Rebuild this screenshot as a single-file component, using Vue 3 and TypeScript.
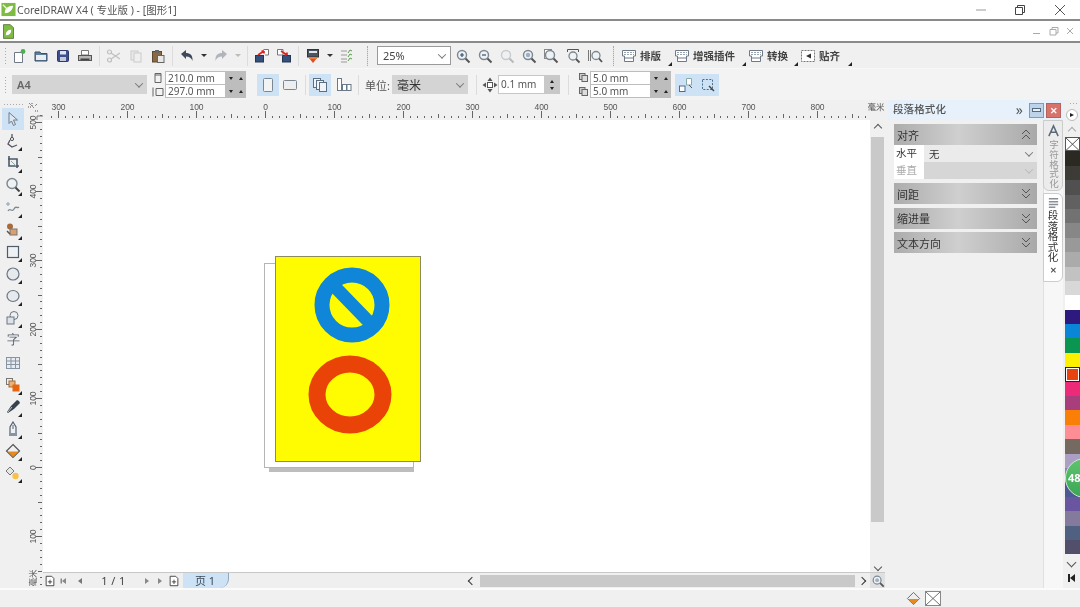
<template>
  <div class="app">
    <!-- 标题栏 -->
    <header class="titlebar">
      <svg class="appicon" viewBox="0 0 16 16">
        <rect x="0.5" y="1" width="15" height="14" fill="#7dbb42" />
        <path d="M4 12C4 7 7 4 13 4C12 9 9 12 4 12Z" fill="#fff" />
        <path d="M2 3L7 8" stroke="#e8f3d8" stroke-width="1.5" />
      </svg>
      <span class="apptitle">CorelDRAW X4 ( 专业版 ) - [图形1]</span>
      <div class="wincontrols">
        <svg viewBox="0 0 12 12" class="win w1"><path d="M1 6H11" stroke="#999" /></svg>
        <svg viewBox="0 0 12 12" class="win w2"><path d="M1.5 3.5H8.5V10.5H1.5ZM3.5 3.5V1.5H10.5V8.5H8.5" fill="none" stroke="#444" /></svg>
        <svg viewBox="0 0 12 12" class="win w3"><path d="M1 1L11 11M11 1L1 11" stroke="#555" /></svg>
      </div>
    </header>

    <!-- 菜单栏 -->
    <div class="menubar">
      <svg class="docicon" viewBox="0 0 12 16">
        <path d="M0.5 0.5H8L11.5 4V15.5H0.5Z" fill="#7dbb42" stroke="#5c7a3a" />
        <path d="M3 12C3 8 5 6 9 6C9 10 7 12 3 12Z" fill="#fff" />
      </svg>
      <div class="mdi">
        <span class="mdi-min"></span>
        <svg viewBox="0 0 10 10" class="mdi-ic"><path d="M1 3.5H7V9H1ZM3 3.5V1.5H9V7H7" fill="none" stroke="#aaa" /></svg>
        <svg viewBox="0 0 10 10" class="mdi-ic"><path d="M2 2L8 8M8 2L2 8" stroke="#aaa" /></svg>
      </div>
    </div>

    <!-- 标准工具栏 -->
    <div class="toolbar one">
      <span class="grip"></span>
      <template v-for="(item, i) in toolbarLeft" :key="i">
        <span v-if="item === '|'" class="sep"></span>
        <span v-else-if="item === 'v'" class="droparrow"></span>
        <span v-else-if="item === '~'" class="droparrow off"></span>
        <button v-else class="tb">
          <svg viewBox="0 0 16 16" class="ic" :class="{ dim: dimIcons.includes(item) }" v-html="icons[item]"></svg>
        </button>
      </template>
      <span class="sep gripsep"></span>
      <div class="combo zoomcombo"><span>25%</span><i class="chev"></i></div>
      <button v-for="z in zoomTools" :key="z" class="tb">
        <svg viewBox="0 0 16 16" class="ic" :class="{ dim: z === 'zoom3' }" v-html="icons[z]"></svg>
      </button>
      <span class="sep gripsep2"></span>
      <div v-for="b in bigTools" :key="b.text" class="bigtool" :style="{ width: b.w + 'px' }">
        <svg viewBox="0 0 16 16" class="ic" v-html="icons[b.icon]"></svg>
        <span>{{ b.text }}</span>
        <i class="corner"></i>
      </div>
    </div>

    <!-- 属性栏 -->
    <div class="toolbar two">
      <span class="grip tall"></span>
      <div class="combo a4"><span>A4</span><i class="chev"></i></div>
      <div class="dimlabels">
        <svg viewBox="0 0 12 12"><path d="M3 1.5H9V10.5H3ZM3 3H9" fill="none" stroke="#666" /></svg>
        <svg viewBox="0 0 12 12"><path d="M1 1.5V10.5M4 2.5H11V9.5H4Z" fill="none" stroke="#666" /></svg>
      </div>
      <div class="spin2">
        <div v-for="v in ['210.0 mm', '297.0 mm']" :key="v" class="spinrow">
          <span class="val">{{ v }}</span><i class="tri down"></i><i class="tri up"></i>
        </div>
      </div>
      <button class="tb on ml11"><svg viewBox="0 0 16 16" class="ic" v-html="icons.portrait"></svg></button>
      <button class="tb"><svg viewBox="0 0 16 16" class="ic" v-html="icons.landscape"></svg></button>
      <span class="sep s2a"></span>
      <button class="tb on"><svg viewBox="0 0 16 16" class="ic" v-html="icons.pages"></svg></button>
      <button class="tb ml2"><svg viewBox="0 0 16 16" class="ic" v-html="icons.pages2"></svg></button>
      <span class="sep s2b"></span>
      <span class="unit">单位:</span>
      <div class="combo unitcombo"><span>毫米</span><i class="chev"></i></div>
      <span class="sep s2c"></span>
      <svg viewBox="0 0 16 16" class="ic nudge" v-html="icons.nudge"></svg>
      <div class="nudgebox">
        <span class="val">0.1 mm</span>
        <div class="updown"><i class="tri up"></i><i class="tri down"></i></div>
      </div>
      <span class="sep s2c"></span>
      <div class="dimlabels dup">
        <svg viewBox="0 0 12 12" v-html="icons.dup"></svg>
        <svg viewBox="0 0 12 12" v-html="icons.dup"></svg>
      </div>
      <div class="spin2">
        <div v-for="(v, i) in ['5.0 mm', '5.0 mm']" :key="i" class="spinrow">
          <span class="val">{{ v }}</span><i class="tri down"></i><i class="tri up"></i>
        </div>
      </div>
      <button class="tb on ml4"><svg viewBox="0 0 16 16" class="ic" v-html="icons.treat1"></svg></button>
      <button class="tb on"><svg viewBox="0 0 16 16" class="ic" v-html="icons.treat2"></svg></button>
    </div>

    <main class="main">
      <!-- 工具箱 -->
      <aside class="toolbox">
        <span class="grip horiz"></span>
        <button v-for="(t, i) in toolbox" :key="t.name" class="toolbtn" :class="{ on: i === 0 }">
          <span v-if="t.name === 'text'" class="ziti">字</span>
          <svg v-else viewBox="0 0 16 16" class="ic" v-html="t.svg"></svg>
          <i v-if="t.more" class="corner"></i>
        </button>
      </aside>

      <!-- 绘图区 -->
      <section class="work">
        <div class="ruler-row">
          <div class="ruler-corner">
            <svg viewBox="0 0 18 20" width="18" height="20">
              <path d="M4 3L9 8M7 3V6M3 7H6M12 4L10 6M10 11H13" stroke="#555" stroke-dasharray="1 1" fill="none" />
              <path d="M12 16V20M12 16H18" stroke="#777" fill="none" />
            </svg>
          </div>
          <svg class="hruler" viewBox="43 100 842 20" width="842" height="20">
            <line v-for="t in hTicks" :key="t.u" :x1="t.p" :x2="t.p" :y1="t.big ? 111 : t.mid ? 114 : 116" y2="118" stroke="#666" stroke-width="1" />
            <text v-for="t in hLabels" :key="t.u" :x="t.p" y="110" class="rtext" text-anchor="middle">{{ Math.abs(t.u) }}</text>
            <text x="876" y="110" class="rtext" text-anchor="middle">毫米</text>
          </svg>
        </div>
        <div class="work-body">
          <svg class="vruler" viewBox="25 120 18 468" width="18" height="468">
            <line v-for="t in vTicks" :key="t.u" :y1="t.p" :y2="t.p" :x1="t.big ? 36 : t.mid ? 38 : 40" x2="42" stroke="#666" stroke-width="1" />
            <text v-for="t in vLabels" :key="t.u" x="36" :y="t.p" class="rtext" text-anchor="middle" :transform="`rotate(-90 36 ${t.p})`">{{ Math.abs(t.u) }}</text>
            <text x="36" y="578" class="rtext" text-anchor="middle" transform="rotate(-90 36 578)">毫米</text>
          </svg>
          <div class="work-right">
            <div class="canvas-row">
              <svg class="canvas" viewBox="43 120 827 452" width="827" height="452">
                <!-- 后面一页 -->
                <rect x="269" y="268" width="145" height="204" fill="#bdbdbd" />
                <rect x="264.5" y="263.5" width="149" height="204" fill="#fff" stroke="#b5b5b5" />
                <!-- 当前页 -->
                <rect x="275.5" y="256.5" width="145" height="205" fill="#fffb00" stroke="#8d8a5e" />
                <circle cx="352" cy="305" r="30" fill="#fffb00" stroke="#0f86d8" stroke-width="15" />
                <line x1="336" y1="288" x2="369" y2="322" stroke="#0f86d8" stroke-width="13" />
                <ellipse cx="350" cy="394.5" rx="33" ry="30.5" fill="#fffb00" stroke="#ea4307" stroke-width="17" />
              </svg>
              <div class="vscroll">
                <i class="arrow-up"></i>
                <div class="thumb"></div>
                <i class="arrow-down"></i>
              </div>
            </div>
            <div class="pagebar">
              <svg viewBox="0 0 14 14" class="pbic first" v-html="icons.addpage"></svg>
              <i class="nav skipl"></i>
              <i class="nav left"></i>
              <span class="pagenum">1 / 1</span>
              <i class="nav right"></i>
              <i class="nav skipr"></i>
              <svg viewBox="0 0 14 14" class="pbic" v-html="icons.addpage"></svg>
              <span class="pagetab">页 1</span>
              <div class="hscroll-spacer"></div>
              <i class="chev-left"></i>
              <div class="hthumb"></div>
              <i class="chev-right"></i>
              <span class="zoomcorner">
                <svg viewBox="0 0 16 16" class="ic small" v-html="icons.zoom4"></svg>
              </span>
            </div>
          </div>
        </div>
      </section>

      <!-- 泊坞窗 -->
      <section class="docker">
        <div class="docker-title">
          <span class="dt-text">段落格式化</span>
          <span class="dt-more">»</span>
          <span class="dt-btn min"><i></i></span>
          <span class="dt-btn close">✕</span>
        </div>
        <div class="docker-body">
          <div class="panels">
            <div class="group-head"><span>对齐</span><i class="dbl up"></i></div>
            <div class="frow">
              <span class="flabel">水平</span>
              <div class="fsel"><span>无</span><i class="chev"></i></div>
            </div>
            <div class="frow off">
              <span class="flabel">垂直</span>
              <div class="fsel"><span></span><i class="chev"></i></div>
            </div>
            <div v-for="g in ['间距', '缩进量', '文本方向']" :key="g" class="group-head spaced">
              <span>{{ g }}</span><i class="dbl"></i>
            </div>
          </div>
          <div class="tabs">
            <div class="vtab">
              <svg viewBox="0 0 14 14" class="tabic"><path d="M2 13L7 2L12 13M4 9H10" fill="none" stroke="#5a6a7a" stroke-width="1.6" /></svg>
              <span class="vtext light">字符格式化</span>
            </div>
            <div class="vtab active">
              <svg viewBox="0 0 14 14" class="tabic"><path d="M2 2H12M2 5H12M2 8H12M2 11H9" stroke="#8a8f96" stroke-width="1.6" /></svg>
              <span class="vtext">段落格式化</span>
              <span class="tabx">✕</span>
            </div>
          </div>
        </div>
      </section>

      <!-- 调色板 -->
      <aside class="palette">
        <span class="grip horiz short"></span>
        <span class="playbtn"><i></i></span>
        <i class="pal-up"></i>
        <div class="swatch none">
          <svg viewBox="0 0 14 14" preserveAspectRatio="none"><path d="M0 0L14 14M14 0L0 14" stroke="#444" /></svg>
        </div>
        <div
          v-for="c in swatches"
          :key="c"
          class="swatch"
          :class="{ picked: c === picked }"
          :style="{ background: c }"
        ></div>
        <i class="pal-down"></i>
        <span class="pal-skip"></span>
        <div class="badge">48</div>
      </aside>
    </main>

    <!-- 状态栏 -->
    <footer class="status">
      <svg viewBox="0 0 16 16" class="ic fillic" v-html="icons.fill"></svg>
      <span class="nofill">
        <svg viewBox="0 0 16 16" preserveAspectRatio="none"><path d="M0 0L16 16M16 0L0 16" stroke="#555" /></svg>
      </span>
    </footer>
  </div>
</template>

<script setup lang="ts">
const mag = (extra = '') =>
  `<circle cx="7" cy="7" r="4.5" fill="#eef2f5" stroke="#7c8790" stroke-width="1.4"/><path d="M10.5 10.5L14.5 14.5" stroke="#555" stroke-width="2"/>${extra}`

const bar = '<path d="M1.5 2.5H14.5V8H12.5V13.5H3.5V8H1.5Z" fill="#fff" stroke="#6f7a86"/><path d="M3 4.5H13M3 6.5H13" stroke="#9aa6b2" stroke-dasharray="2 1"/><path d="M3.5 10H12.5" stroke="#6f7a86"/>'

const icons: Record<string, string> = {
  new: '<path d="M3.5 4.5H11.5V14.5H3.5Z" fill="#fff" stroke="#6f7a86"/><circle cx="12" cy="3.5" r="2.4" fill="#4caf50"/>',
  open: '<path d="M2 4H7L8 5.5H14V13H2Z" fill="#5f7f9e" stroke="#3c5168"/><path d="M3 7H13V12H3Z" fill="#e9eef3"/>',
  save: '<rect x="2.5" y="2.5" width="11" height="11" rx="1" fill="#3f4f8c" stroke="#2e3a68"/><rect x="5" y="3" width="6" height="3.5" fill="#dfe4ee"/><rect x="5" y="9" width="6" height="4" fill="#c3cbdc"/>',
  print: '<path d="M4.5 2.5H11.5V7H4.5Z" fill="#fff" stroke="#777"/><rect x="1.5" y="7.5" width="13" height="5" fill="#b5b5b5" stroke="#555"/><rect x="3.5" y="10.5" width="9" height="1.5" fill="#444"/>',
  cut: '<circle cx="3.5" cy="4" r="2" fill="none" stroke="#666" stroke-width="1.2"/><circle cx="3.5" cy="12" r="2" fill="none" stroke="#666" stroke-width="1.2"/><path d="M5 5L14 11M5 11L14 5" stroke="#666" stroke-width="1.2"/>',
  copy: '<rect x="3" y="3" width="7" height="9" fill="#ddd" stroke="#888"/><rect x="6" y="5" width="7" height="9" fill="#eee" stroke="#888"/>',
  paste: '<rect x="2.5" y="3.5" width="9" height="10.5" fill="#8a6a45" stroke="#5e4a30"/><rect x="5" y="2" width="4" height="3" fill="#666"/><rect x="7.5" y="7.5" width="6.5" height="7" fill="#e8e8e8" stroke="#666"/>',
  undo: '<path d="M2 6L7 2V5C11 5 14 7 13.5 13C12.5 10 10.5 8.5 7 8.5V11Z" fill="#3c4a5c"/>',
  redo: '<path d="M14 6L9 2V5C5 5 2 7 2.5 13C3.5 10 5.5 8.5 9 8.5V11Z" fill="#3c4a5c"/>',
  import: '<rect x="1.5" y="7.5" width="8" height="6.5" fill="#35507a" stroke="#243650"/><path d="M9.5 1.5H14.5V7H11" fill="#fff" stroke="#777"/><path d="M4 7L10 3M10 3L7.5 3M10 3V5.5" stroke="#d22" stroke-width="1.6" fill="none"/>',
  export: '<rect x="6.5" y="7.5" width="8" height="6.5" fill="#35507a" stroke="#243650"/><path d="M1.5 1.5H7V7H1.5Z" fill="#fff" stroke="#777"/><path d="M5 3L11 7M11 7V4.5M11 7H8.5" stroke="#d22" stroke-width="1.6" fill="none"/>',
  publish: '<rect x="2.5" y="1.5" width="11" height="7.5" fill="#4a5561" stroke="#333"/><rect x="4" y="3" width="8" height="2" fill="#dfe4e8"/><path d="M4 10H12L8 15Z" fill="#e24a2a"/><rect x="4" y="9" width="8" height="2" fill="#f07a3a"/>',
  options: '<path d="M2 3H8M2 7H8M2 11H8M2 14H8" stroke="#9a9a9a"/><path d="M9 5L11 2L13 3M9 9L11 6L13 7M9 13L11 10L13 11" stroke="#5a9a4a" fill="none"/>',
  zoom1: mag('<path d="M5 7H9M7 5V9" stroke="#34506e" stroke-width="1.2"/>'),
  zoom2: mag('<path d="M5 7H9" stroke="#34506e" stroke-width="1.2"/>'),
  zoom3: mag(),
  zoom4: mag('<circle cx="7" cy="7" r="2.2" fill="#9db0c2"/>'),
  zoom5: '<rect x="1.5" y="1.5" width="7" height="9" fill="#fff" stroke="#888"/>' + mag(),
  zoom6: '<path d="M2.5 1.5H13.5M2.5 1.5V4M13.5 1.5V4" stroke="#555" fill="none"/><circle cx="8" cy="8" r="4" fill="#eef2f5" stroke="#7c8790" stroke-width="1.3"/><path d="M11 11L14.5 14.5" stroke="#555" stroke-width="1.8"/>',
  zoom7: '<path d="M1.5 2V13M3.5 2V13" stroke="#777"/><circle cx="9" cy="7.5" r="4" fill="#eef2f5" stroke="#7c8790" stroke-width="1.3"/><path d="M12 10.5L15 14" stroke="#555" stroke-width="1.8"/>',
  bar1: bar,
  snap: '<rect x="1.5" y="2.5" width="13" height="11" fill="#fff" stroke="#777" stroke-dasharray="2 1"/><path d="M11 5.5L6 8L11 10.5Z" fill="#333"/>',
  portrait: '<rect x="3.5" y="1.5" width="9" height="13" rx="1" fill="#f3f3f3" stroke="#7a8794"/>',
  landscape: '<rect x="1.5" y="3.5" width="13" height="9" rx="1" fill="#eee" stroke="#7a8794"/>',
  pages: '<rect x="1.5" y="1.5" width="7" height="9" fill="#f0f4f8" stroke="#5c6f82"/><rect x="4.5" y="3.5" width="7" height="9" fill="#f0f4f8" stroke="#5c6f82"/><rect x="7.5" y="5.5" width="7" height="9" fill="#f0f4f8" stroke="#5c6f82"/>',
  pages2: '<rect x="1.5" y="1.5" width="4" height="12" fill="#fff" stroke="#6a7a88"/><rect x="6.5" y="7.5" width="4" height="6" fill="#fff" stroke="#6a7a88"/><rect x="11" y="7.5" width="4" height="6" fill="#fff" stroke="#6a7a88"/>',
  nudge: '<rect x="5.5" y="5.5" width="5" height="5" fill="#fff" stroke="#555"/><path d="M8 0.5L10.5 4H5.5ZM8 15.5L5.5 12H10.5ZM0.5 8L4 5.5V10.5ZM15.5 8L12 10.5V5.5Z" fill="#555"/>',
  dup: '<rect x="1.5" y="1.5" width="5.5" height="6" fill="#ccc" stroke="#666"/><rect x="4" y="3.5" width="5.5" height="6" fill="#ddd" stroke="#666"/>',
  treat1: '<rect x="1.5" y="9" width="5.5" height="5.5" fill="#fff" stroke="#4a6d90"/><path d="M8.5 1.5H13.5V8H8.5Z" fill="#fff" stroke="#8aa"/><path d="M11 8L14 11" stroke="#555"/>',
  treat2: '<rect x="2.5" y="2.5" width="10" height="10" fill="none" stroke="#4a6d90" stroke-dasharray="2 1.4"/><path d="M9 9L14 14" stroke="#444" stroke-width="1.4"/>',
  addpage: '<path d="M2.5 1.5H9L11.5 4V12.5H2.5Z" fill="#fff" stroke="#333"/><path d="M4.5 8H9.5M7 5.5V10.5" stroke="#333"/>',
  fill: '<path d="M8 1.5L14.5 8L8 14.5L1.5 8Z" fill="#eee" stroke="#666"/><path d="M2.5 8.5H13.5L8 14Z" fill="#e8891f"/>'
}

const toolbarLeft = ['new', 'open', 'save', 'print', '|', 'cut', 'copy', 'paste', '|', 'undo', 'v', 'redo', '~', '|', 'import', 'export', '|', 'publish', 'v', 'options']
const dimIcons = ['cut', 'copy', 'redo']
const zoomTools = ['zoom1', 'zoom2', 'zoom3', 'zoom4', 'zoom5', 'zoom6', 'zoom7']
const bigTools = [
  { text: '排版', icon: 'bar1', w: 53 },
  { text: '增强插件', icon: 'bar1', w: 74 },
  { text: '转换', icon: 'bar1', w: 52 },
  { text: '贴齐', icon: 'snap', w: 54 }
]

const toolbox = [
  { name: 'pick', more: false, svg: '<path d="M4 1.5L12.5 9H8.5L10.5 13.5L8.5 14.5L6.5 10L4 12.5Z" fill="#dfe6ee" stroke="#6f7d8c"/>' },
  { name: 'shape', more: true, svg: '<path d="M7 1V5M5 7L3 11L7 14L12 12" stroke="#556" fill="none" stroke-width="1.3"/><circle cx="7" cy="6" r="1.6" fill="#eee" stroke="#555"/>' },
  { name: 'crop', more: true, svg: '<path d="M3 4H12V13M4 1V11H14" stroke="#4a5a6a" stroke-width="1.6" fill="none"/><path d="M6 6L11 11" stroke="#8aa" />' },
  { name: 'zoom', more: true, svg: '<circle cx="7" cy="6.5" r="5" fill="#eef2f5" stroke="#7c8790" stroke-width="1.4"/><path d="M10.5 10.5L14.5 14.5" stroke="#444" stroke-width="2"/>' },
  { name: 'free', more: true, svg: '<path d="M3 2V6M1 4H5" stroke="#8aa0b5"/><path d="M3 11C5 7 7 13 9 9S12 9 14 7" stroke="#7a8894" stroke-width="1.3" fill="none"/>' },
  { name: 'smart', more: true, svg: '<circle cx="5" cy="4.5" r="3" fill="#a96b3c"/><rect x="5" y="7" width="7" height="6" fill="#d8a070" stroke="#777"/><path d="M2 9L5 12" stroke="#555" stroke-width="1.5"/>' },
  { name: 'rect', more: true, svg: '<rect x="2.5" y="2.5" width="11" height="11" fill="#eef1f4" stroke="#4f5d6b" stroke-width="1.2"/>' },
  { name: 'ellipse', more: true, svg: '<circle cx="8" cy="8" r="6" fill="#e6eaee" stroke="#6a7682" stroke-width="1.2"/>' },
  { name: 'polygon', more: true, svg: '<ellipse cx="8" cy="8" rx="6" ry="5.5" fill="#e6eaee" stroke="#6a7682" stroke-width="1.2"/>' },
  { name: 'basic', more: true, svg: '<circle cx="9" cy="5.5" r="4" fill="#eef1f4" stroke="#6a7682"/><rect x="2" y="7" width="7" height="7" fill="#dde2e8" stroke="#6a7682"/>' },
  { name: 'text', more: false, svg: '' },
  { name: 'table', more: false, svg: '<rect x="1.5" y="2.5" width="13" height="11" fill="#e8ecf2" stroke="#8794a3"/><path d="M1.5 6H14.5M1.5 9.5H14.5M6 2.5V13.5M10.5 2.5V13.5" stroke="#8794a3"/>' },
  { name: 'blend', more: true, svg: '<rect x="1.5" y="1.5" width="6" height="6" fill="#eee" stroke="#777"/><rect x="4" y="4" width="6" height="6" fill="#e9b27a" stroke="#a86a2a"/><rect x="7.5" y="7.5" width="7" height="7" fill="#e8650f"/>' },
  { name: 'dropper', more: true, svg: '<path d="M14 2L12 1L6 7L2 13L3 14L9 10L15 4Z" fill="#37424e"/><path d="M3 13L7 8" stroke="#b5c2cc"/>' },
  { name: 'outline', more: true, svg: '<path d="M8 1L11 6V13H5V6Z" fill="#eef1f4" stroke="#56626e" stroke-width="1.2"/><path d="M8 4V8" stroke="#56626e"/><rect x="4" y="12" width="8" height="3" fill="#8794a3"/>' },
  { name: 'fill', more: true, svg: '<path d="M8 1.5L14.5 8L8 14.5L1.5 8Z" fill="#f0f0f0" stroke="#555" stroke-width="1.2"/><path d="M2.5 8.5H13.5L8 14Z" fill="#e8891f"/>' },
  { name: 'ifill', more: true, svg: '<path d="M5 2L9 6L5 10L1 6Z" fill="#e6e6e6" stroke="#777"/><circle cx="10.5" cy="11" r="3.2" fill="#f6c14c"/>' }
]

const picked = '#e8430f'
const swatches = [
  '#2a2a22', '#3d3b36', '#505050', '#616161', '#727272', '#878787', '#999999', '#ababab', '#c2c2c2', '#d8d8d8',
  '#ffffff', '#2e1a7e', '#0a86d9', '#0a9650', '#fff000', picked, '#ec2a78', '#a83e7c', '#f97f06', '#ff8d96',
  '#746a62', '#ab9fc4', '#8a82b5', '#4c5a94', '#6a56a0', '#847a9d', '#4f6081', '#524f6b'
]

// 标尺刻度: 100 单位约 69px
const scale = 0.69
const makeTicks = (from: number, to: number, pos: (u: number) => number) => {
  const list = []
  for (let u = from; u <= to; u += 10) {
    list.push({ u, p: Math.round(pos(u)) + 0.5, big: u % 100 === 0, mid: u % 50 === 0 })
  }
  return list
}
const hTicks = makeTicks(-310, 870, (u) => 265 + u * scale)
const hLabels = hTicks.filter((t) => t.big)
const vTicks = makeTicks(-170, 510, (u) => 467 - u * scale)
const vLabels = vTicks.filter((t) => t.big)
</script>

<style>
html,
body {
  margin: 0;
  overflow: hidden;
}
</style>

<style scoped>
* {
  box-sizing: border-box;
}
.app {
  width: 1080px;
  height: 607px;
  overflow: hidden;
  display: flex;
  flex-direction: column;
  background: #f0f0f0;
  color: #444;
  font-family: "Noto Sans", "Noto Sans CJK SC", sans-serif;
  font-size: 11px;
  filter: blur(0.35px);
}
button {
  border: 0;
  background: none;
  padding: 0;
}
.titlebar {
  height: 21px;
  flex: none;
  background: #fff;
  border-bottom: 2px solid #8a8a8a;
  display: flex;
  align-items: center;
  padding-left: 1px;
}
.appicon {
  width: 15px;
  height: 15px;
}
.apptitle {
  margin-left: 1px;
  font-size: 10.5px;
  color: #555;
}
.wincontrols {
  margin-left: auto;
  display: flex;
  align-items: center;
}
.win {
  width: 12px;
  height: 12px;
}
.w1 {
  margin-right: 27px;
}
.w2 {
  margin-right: 28px;
}
.w3 {
  margin-right: 14px;
}
.menubar {
  height: 22px;
  flex: none;
  background: #fff;
  border-bottom: 2px solid #8a8a8a;
  display: flex;
  align-items: center;
  padding-left: 3px;
}
.docicon {
  width: 11px;
  height: 15px;
}
.mdi {
  margin-left: auto;
  display: flex;
  align-items: center;
  gap: 6px;
  padding-right: 5px;
}
.mdi-min {
  width: 7px;
  height: 1px;
  margin-top: 5px;
  background: #aaa;
  margin-right: 3px;
}
.mdi-ic {
  width: 10px;
  height: 10px;
}
.toolbar {
  flex: none;
  display: flex;
  align-items: center;
  padding-left: 4px;
}
.toolbar.one {
  height: 25px;
}
.toolbar.two {
  height: 32px;
  background: #f3f3f3;
  border-top: 1px solid #f8f8f8;
}
.grip {
  width: 3px;
  height: 18px;
  margin-right: 1px;
  background-image: radial-gradient(#aaa 40%, transparent 45%);
  background-size: 3px 3px;
  flex: none;
}
.grip.horiz {
  display: block;
  width: 20px;
  height: 3px;
  margin: 3px 0 2px 3px;
}
.grip.horiz.short {
  width: 9px;
  margin: 2px 0 0 4px;
}
.tb {
  position: relative;
  width: 22px;
  height: 22px;
  display: flex;
  align-items: center;
  justify-content: center;
  flex: none;
}
.tb.on {
  background: #cde2f5;
}
.ic {
  width: 16px;
  height: 16px;
  flex: none;
}
.ic.dim {
  opacity: 0.35;
}
.ic.small {
  width: 14px;
  height: 14px;
}
.sep {
  width: 1px;
  height: 20px;
  margin: 0 3px;
  background: #dcdcdc;
  flex: none;
}
.gripsep {
  margin: 0 9px;
  border-left: 1px dotted #aaa;
}
.gripsep2 {
  margin: 0 7px;
  border-left: 1px dotted #aaa;
}
.droparrow {
  width: 12px;
  display: flex;
  justify-content: center;
  flex: none;
}
.droparrow::after {
  content: "";
  border: 3px solid transparent;
  border-top: 3px solid #333;
  margin-top: 3px;
}
.droparrow.off::after {
  border-top-color: #bbb;
}
.combo {
  height: 19px;
  display: flex;
  align-items: center;
  justify-content: space-between;
  padding: 0 5px;
  flex: none;
  font-size: 11px;
}
.zoomcombo {
  width: 74px;
  margin-right: 1px;
  background: #fff;
  border: 1px solid #9a9a9a;
}
.a4 {
  width: 135px;
  margin-left: 4px;
  background: #d4d4d4;
  font-weight: 600;
  color: #666;
}
.unitcombo {
  width: 76px;
  background: #d4d4d4;
  font-size: 12px;
  color: #333;
}
.chev {
  width: 6px;
  height: 6px;
  border-right: 1.4px solid #777;
  border-bottom: 1.4px solid #777;
  transform: rotate(45deg) translate(-1px, -1px);
  flex: none;
}
.bigtool {
  position: relative;
  display: flex;
  align-items: center;
  gap: 3px;
  flex: none;
  height: 22px;
  font-size: 10.5px;
  font-weight: 600;
  color: #444;
}
.corner {
  position: absolute;
  right: 2px;
  bottom: 1px;
  width: 0;
  height: 0;
  border-left: 4px solid transparent;
  border-bottom: 4px solid #222;
}
.dimlabels {
  width: 18px;
  display: flex;
  flex-direction: column;
  align-items: flex-end;
  padding-right: 1px;
  gap: 2px;
  flex: none;
}
.dimlabels svg {
  width: 12px;
  height: 12px;
}
.dimlabels.dup {
  width: 15px;
  margin-left: 1px;
  padding-right: 0;
}
.spin2 {
  width: 81px;
  height: 27px;
  background: #bdbdbd;
  padding: 1px;
  display: flex;
  flex-direction: column;
  gap: 1px;
  flex: none;
}
.spinrow {
  flex: 1;
  display: flex;
  align-items: center;
  gap: 2px;
}
.val {
  background: #fff;
  height: 100%;
  flex: 1;
  padding-left: 2px;
  font-size: 10px;
  line-height: 12px;
  color: #555;
}
.tri {
  width: 0;
  height: 0;
  margin: 0 2px;
  border-left: 2.5px solid transparent;
  border-right: 2.5px solid transparent;
}
.tri.up {
  border-bottom: 3px solid #222;
}
.tri.down {
  border-top: 3px solid #222;
}
.ml11 {
  margin-left: 11px;
}
.ml2 {
  margin-left: 2px;
}
.ml4 {
  margin-left: 4px;
}
.s2a {
  margin: 0 3px 0 4px;
}
.s2b {
  margin: 0 6px 0 3px;
}
.s2c {
  margin: 0 5px 0 8px;
}
.unit {
  width: 27px;
  font-size: 11px;
  color: #555;
  flex: none;
}
.nudgebox {
  width: 62px;
  height: 19px;
  display: flex;
  background: #c8c8c8;
  padding: 1px;
  flex: none;
}
.nudgebox .val {
  line-height: 16px;
}
.updown {
  width: 15px;
  display: flex;
  flex-direction: column;
  align-items: center;
  justify-content: center;
  gap: 4px;
}
.main {
  height: 488px;
  flex: none;
  display: flex;
  position: relative;
}
.toolbox {
  width: 25px;
  flex: none;
  display: flex;
  flex-direction: column;
}
.toolbtn {
  position: relative;
  width: 22px;
  height: 22.15px;
  margin-left: 2px;
  display: flex;
  align-items: center;
  justify-content: center;
  flex: none;
}
.toolbtn.on {
  background: #cde2f5;
}
.ziti {
  font-size: 13px;
  font-weight: 500;
  color: #5a6672;
}
.work {
  width: 860px;
  flex: none;
  display: flex;
  flex-direction: column;
}
.ruler-row {
  height: 20px;
  display: flex;
}
.ruler-corner {
  width: 18px;
  height: 20px;
  flex: none;
}
.hruler,
.vruler,
.canvas {
  display: block;
  flex: none;
}
.vruler {
  overflow: visible;
}
.rtext {
  font-family: "Liberation Sans", "Noto Sans CJK SC", sans-serif;
  font-size: 8.5px;
  fill: #555;
}
.work-body {
  display: flex;
  flex: 1;
}
.work-right {
  width: 842px;
  display: flex;
  flex-direction: column;
}
.canvas-row {
  height: 452px;
  display: flex;
}
.canvas {
  background: #fff;
}
.vscroll {
  width: 15px;
  display: flex;
  flex-direction: column;
  align-items: center;
  background: #f0f0f0;
}
.thumb {
  width: 13px;
  height: 385px;
  margin-top: 6px;
  background: #c9c9c9;
  flex: none;
}
.arrow-up,
.arrow-down {
  width: 6px;
  height: 6px;
  border: solid #555;
  border-width: 1.6px 0 0 1.6px;
  flex: none;
}
.arrow-up {
  margin-top: 5px;
  transform: rotate(45deg);
}
.arrow-down {
  margin-top: 42px;
  transform: rotate(225deg);
}
.pagebar {
  height: 16px;
  display: flex;
  align-items: center;
  background: #efefef;
  border-top: 1px solid #c8c8c8;
  position: relative;
}
.pbic {
  width: 12px;
  height: 12px;
  flex: none;
}
.pbic.first {
  margin-left: 1px;
}
.nav {
  width: 0;
  height: 0;
  border-top: 3.5px solid transparent;
  border-bottom: 3.5px solid transparent;
  flex: none;
}
.nav.skipl {
  margin-left: 6px;
  border-right: 4px solid #888;
  box-shadow: -2px 0 0 -0.5px #888;
}
.nav.left {
  margin-left: 12px;
  border-right: 4px solid #777;
}
.nav.right {
  border-left: 4px solid #888;
}
.nav.skipr {
  margin-left: 9px;
  border-left: 4px solid #888;
  margin-right: 6px;
}
.pagenum {
  width: 63px;
  text-align: center;
  font-size: 11px;
  color: #444;
  letter-spacing: 0.4px;
}
.pagetab {
  width: 46px;
  height: 15px;
  margin-left: 3px;
  padding-left: 12px;
  background: #cde2f5;
  border-right: 1px solid #8fa8bf;
  border-radius: 0 0 9px 0;
  font-size: 11px;
  line-height: 15px;
  color: #3a4a5a;
  flex: none;
}
.hscroll-spacer {
  flex: 1;
}
.chev-left,
.chev-right {
  width: 6px;
  height: 6px;
  border: solid #333;
  flex: none;
}
.chev-left {
  border-width: 0 0 1.6px 1.6px;
  transform: rotate(45deg);
  margin-right: 5px;
}
.chev-right {
  border-width: 1.6px 1.6px 0 0;
  transform: rotate(45deg);
  margin: 0 5px 0 4px;
}
.hthumb {
  width: 375px;
  height: 12px;
  background: #c9c9c9;
  flex: none;
}
.zoomcorner {
  width: 15px;
  height: 15px;
  background: #e0e0e0;
  display: flex;
  align-items: center;
  justify-content: center;
  flex: none;
}
.docker {
  width: 178px;
  flex: none;
  display: flex;
  flex-direction: column;
}
.docker-title {
  height: 20px;
  margin-left: 3px;
  background: #e6f1fb;
  display: flex;
  align-items: center;
  padding-left: 5px;
  flex: none;
}
.dt-text {
  margin-top: -3px;
  font-size: 10.5px;
  font-weight: 500;
  color: #555;
  letter-spacing: 0.1px;
}
.dt-more {
  margin-left: auto;
  font-size: 14px;
  line-height: 16px;
  color: #555;
  margin-right: 6px;
}
.dt-btn {
  width: 15px;
  height: 15px;
  display: flex;
  align-items: center;
  justify-content: center;
  margin-right: 2px;
  font-size: 9px;
  font-weight: 700;
}
.dt-btn.min {
  background: #bcd3ea;
  border: 1px solid #7f9bb8;
}
.dt-btn.min i {
  width: 9px;
  height: 4px;
  border: 1px solid #55697d;
  background: #e8eef5;
  display: block;
}
.dt-btn.close {
  background: #d8736c;
  border: 1px solid #b5615c;
  color: #fff;
}
.docker-body {
  flex: 1;
  display: flex;
}
.panels {
  width: 158px;
  padding: 4px 6px 0 9px;
  flex: none;
}
.group-head {
  height: 21px;
  display: flex;
  align-items: center;
  justify-content: space-between;
  padding: 0 7px 0 3px;
  background: linear-gradient(90deg, #acacac, #cfcfcf 45%, #a9a9a9);
  font-size: 11px;
  color: #333;
}
.group-head.spaced {
  margin-top: 3.5px;
}
.dbl {
  width: 8px;
  height: 9px;
  background:
    linear-gradient(45deg, transparent 45%, #555 45%, #555 60%, transparent 60%) 0 0 / 4px 4px no-repeat,
    linear-gradient(-45deg, transparent 45%, #555 45%, #555 60%, transparent 60%) 4px 0 / 4px 4px no-repeat,
    linear-gradient(45deg, transparent 45%, #555 45%, #555 60%, transparent 60%) 0 5px / 4px 4px no-repeat,
    linear-gradient(-45deg, transparent 45%, #555 45%, #555 60%, transparent 60%) 4px 5px / 4px 4px no-repeat;
}
.dbl.up {
  transform: scaleY(-1);
}
.frow {
  height: 17px;
  display: flex;
}
.frow.off {
  margin-bottom: 4px;
}
.flabel {
  width: 30px;
  background: #fff;
  padding-left: 2px;
  font-size: 10.5px;
  line-height: 17px;
  color: #333;
  flex: none;
}
.frow.off .flabel {
  color: #aaa;
}
.fsel {
  flex: 1;
  display: flex;
  align-items: center;
  justify-content: space-between;
  padding: 0 5px;
  background: #ebebeb;
  font-size: 10.5px;
  color: #333;
}
.frow.off .fsel {
  background: #d6d6d6;
}
.frow.off .chev {
  border-color: #bbb;
}
.tabs {
  width: 20px;
  display: flex;
  flex-direction: column;
  gap: 2px;
  background: #f7f7f7;
  border-left: 1px solid #e0e0e0;
  flex: none;
}
.vtab {
  height: 71px;
  margin-left: -1px;
  background: #ececec;
  border-radius: 0 0 6px 6px;
  border: 1px solid #ccc;
  display: flex;
  flex-direction: column;
  align-items: center;
  flex: none;
}
.vtab.active {
  height: 89px;
  background: #fff;
  border-radius: 0 6px 6px 0;
}
.tabic {
  width: 13px;
  height: 13px;
  margin-top: 3px;
  flex: none;
}
.vtext {
  writing-mode: vertical-rl;
  font-size: 10.5px;
  margin-top: 0;
  color: #333;
  letter-spacing: 0;
}
.vtext.light {
  color: #999;
  letter-spacing: 0.2px;
  font-size: 9.5px;
  margin-top: 3px;
}
.tabx {
  font-size: 8px;
  margin-top: 1px;
  color: #555;
  font-weight: 700;
}
.palette {
  position: relative;
  width: 17px;
  flex: none;
  display: flex;
  flex-direction: column;
  overflow: hidden;
  padding-left: 2px;
}
.playbtn {
  width: 12px;
  height: 12px;
  margin: 4px 0 0 1px;
  border-radius: 50%;
  border: 1px solid #bbb;
  background: #fff;
  display: flex;
  align-items: center;
  justify-content: center;
  flex: none;
}
.playbtn i {
  border-left: 4px solid #222;
  border-top: 2.5px solid transparent;
  border-bottom: 2.5px solid transparent;
}
.pal-up {
  width: 6px;
  height: 6px;
  margin: 7px 0 3px 4px;
  border: solid #aaa;
  border-width: 1.5px 0 0 1.5px;
  transform: rotate(45deg);
  flex: none;
}
.swatch {
  height: 14.4px;
  flex: none;
}
.swatch.none {
  background: #fff;
  border: 1px solid #555;
}
.swatch.none svg {
  display: block;
  width: 100%;
  height: 100%;
}
.swatch.picked {
  border: 1px solid #222;
  outline: 1px solid #fff;
  outline-offset: -2px;
  box-shadow: 0 0 0 1px #fff inset;
}
.pal-down {
  width: 7px;
  height: 7px;
  margin: 5px 0 0 3px;
  border: solid #555;
  border-width: 0 1.5px 1.5px 0;
  transform: rotate(45deg);
  flex: none;
}
.pal-skip {
  width: 0;
  height: 0;
  margin: 8px 0 0 5px;
  border-top: 4px solid transparent;
  border-bottom: 4px solid transparent;
  border-right: 5px solid #222;
  box-shadow: -2px 0 0 0 #222;
  flex: none;
}
.badge {
  position: absolute;
  left: 2px;
  top: 358px;
  width: 40px;
  height: 40px;
  border-radius: 50%;
  background: linear-gradient(#5fc46e, #3aa655);
  border: 1.5px solid #d5e8d5;
  color: #fff;
  font-size: 11px;
  font-weight: 700;
  line-height: 37px;
  padding-left: 2px;
}
.status {
  height: 17px;
  margin-top: 2px;
  flex: none;
  display: flex;
  align-items: center;
  padding-left: 906px;
  background: #f0f0f0;
  box-shadow: 0 -2px 0 #fbfbfb;
}
.fillic {
  width: 15px;
  height: 15px;
}
.nofill {
  width: 16px;
  height: 15px;
  margin-left: 4px;
  border: 1px solid #888;
  background: #fff;
}
.nofill svg {
  display: block;
  width: 100%;
  height: 100%;
}
</style>
